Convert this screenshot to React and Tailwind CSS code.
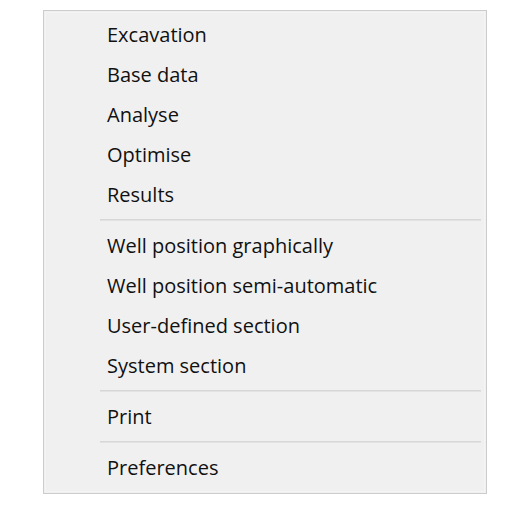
const groups = [
  ["Excavation", "Base data", "Analyse", "Optimise", "Results"],
  [
    "Well position graphically",
    "Well position semi-automatic",
    "User-defined section",
    "System section",
  ],
  ["Print"],
  ["Preferences"],
];

const MenuItem = ({ label }) => (
  <div className="h-[40px] flex items-center pl-[61px] text-[20px] leading-none font-medium text-[#111]">
    {label}
  </div>
);

const Separator = () => (
  <div className="h-[11px] pt-[4px] pl-[54px] pr-[3px]">
    <div className="h-[1px] bg-[#d7d7d7]" />
    <div className="h-[1px] bg-[#e2e2e2]" />
  </div>
);

export default function App() {
  return (
    <div
      className="w-[526px] h-[529px] bg-white pt-[10px] pl-[43px]"
      style={{ fontFamily: '"Open Sans", "Noto Sans", sans-serif' }}
    >
      <div className="w-[444px] h-[484px] border border-[#cccccc] bg-[#f0f0f0] p-[1px]">
        <div className="h-full border border-[#f4f4f4] pt-[2px]">
          {groups.map((items, i) => (
            <div key={i}>
              {i > 0 && <Separator />}
              {items.map((label) => (
                <MenuItem key={label} label={label} />
              ))}
            </div>
          ))}
        </div>
      </div>
    </div>
  );
}
